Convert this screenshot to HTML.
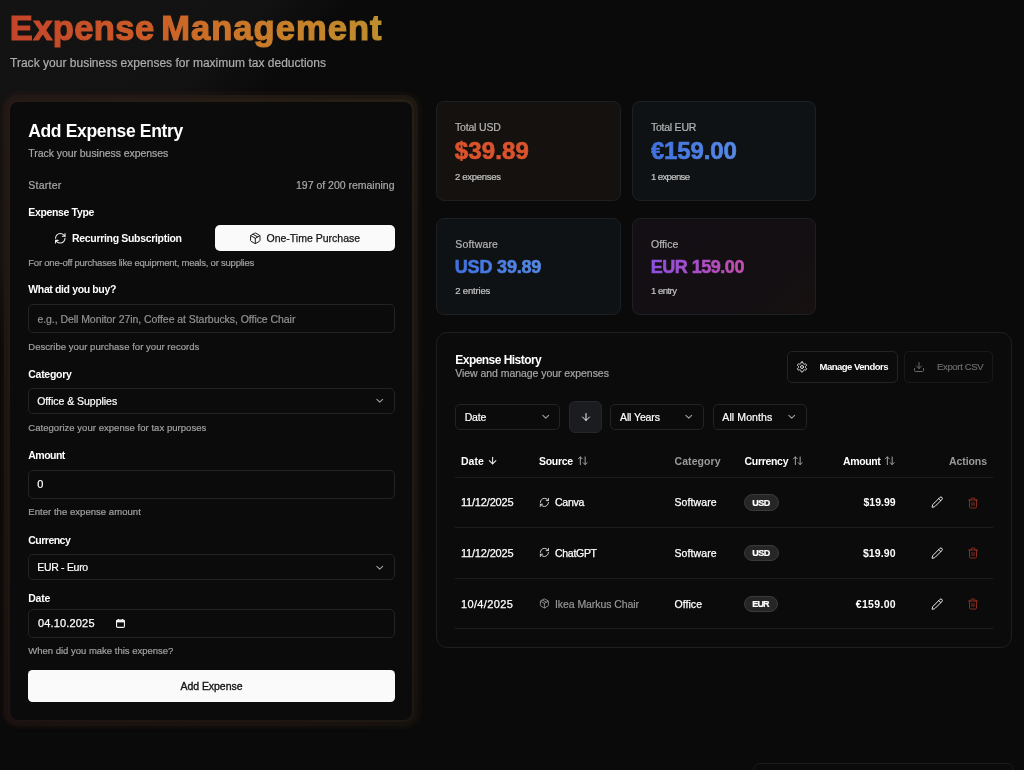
<!DOCTYPE html>
<html lang="en">
<head>
<meta charset="utf-8">
<title>Expense Management</title>
<style>
*{box-sizing:border-box;margin:0;padding:0}
html,body{width:1024px;height:770px;overflow:hidden;background:#0a0a0a}
body{position:relative;font-family:"Liberation Sans",sans-serif;color:#fff;
 background:linear-gradient(135deg,#131313 0%,#121212 14.8%,#0a0a0a 19.6%) #0a0a0a;}
.t{position:absolute;white-space:pre;font-weight:400}
.bx{position:absolute}
svg{position:absolute;overflow:visible}
.ic{fill:none;stroke:currentColor;stroke-width:2;stroke-linecap:round;stroke-linejoin:round}
.glow{left:0.5px;top:91px;width:421px;height:638px;border-radius:18px;
 background:linear-gradient(90deg,rgba(210,80,40,.04),rgba(200,100,40,.04) 50%,rgba(190,130,40,.04));filter:blur(1px)}
.glow2{left:4px;top:94.5px;width:413.5px;height:631px;border-radius:14px;
 background:linear-gradient(180deg,rgba(255,220,180,.02),rgba(0,0,0,.12)),linear-gradient(90deg,#1e1412,#1e1511 50%,#1a130f);filter:blur(.7px)}
.glow3{left:8px;top:98.5px;width:405.5px;height:623px;border-radius:10px;
 background:linear-gradient(180deg,rgba(255,220,180,.02),rgba(0,0,0,.12)),linear-gradient(90deg,#221614,#231912 50%,#201c12);filter:blur(.5px)}
.card{left:10px;top:102px;width:402px;height:617.5px;border-radius:8px;background:#0b0b0b}
.inp{left:28px;width:367px;border:1px solid #232323;border-radius:5px;background:#0b0b0b}
.stat{border:1px solid #1d2023;border-radius:8px}
.hist{left:436px;top:332px;width:576px;height:315.5px;border:1px solid #1f1f1f;border-radius:11px;background:#0b0b0b}
.btn{border:1px solid #222324;border-radius:5px}
.hr{left:455px;width:538px;height:1px;background:#1d1d1d}
.badge{height:16.5px;border-radius:9px;background:#262626;border:1px solid #3b3b3b}
</style>
</head>
<body>
<!-- left form card -->
<div class="bx glow"></div>
<div class="bx glow2"></div>
<div class="bx glow3"></div>
<div class="bx card"></div>
<div class="bx" style="left:215px;top:225px;width:180px;height:26px;border-radius:5px;background:#fafafa"></div>
<div class="bx inp" style="top:304px;height:29px"></div>
<div class="bx inp" style="top:388px;height:26px"></div>
<div class="bx inp" style="top:470px;height:29px"></div>
<div class="bx inp" style="top:554px;height:26px"></div>
<div class="bx inp" style="top:609px;height:29px"></div>
<div class="bx" style="left:28px;top:670px;width:367px;height:32px;border-radius:4.5px;background:#fafafa"></div>

<!-- stat cards -->
<div class="bx stat" style="left:436px;top:101px;width:185px;height:100px;background:#14110e"></div>
<div class="bx stat" style="left:632px;top:101px;width:184px;height:100px;background:#0f1215"></div>
<div class="bx stat" style="left:436px;top:218px;width:185px;height:97px;background:#0f1215"></div>
<div class="bx stat" style="left:632px;top:218px;width:184px;height:97px;background:linear-gradient(135deg,#130f14 0%,#130f13 70%,#17110f 100%)"></div>

<!-- history panel -->
<div class="bx hist"></div>
<div class="bx btn" style="left:787px;top:351px;width:110.5px;height:32px"></div>
<div class="bx btn" style="left:904px;top:351px;width:89px;height:32px;border-color:#191919"></div>
<div class="bx btn" style="left:455px;top:404px;width:105px;height:26px"></div>
<div class="bx btn" style="left:569px;top:401px;width:32.5px;height:32px;background:#1a1c1f;border-color:#25272a;border-radius:6px"></div>
<div class="bx btn" style="left:610px;top:404px;width:94px;height:26px"></div>
<div class="bx btn" style="left:712.5px;top:404px;width:94px;height:26px"></div>
<div class="bx hr" style="top:477px"></div>
<div class="bx hr" style="top:527px"></div>
<div class="bx hr" style="top:578px"></div>
<div class="bx hr" style="top:628px"></div>
<div class="bx badge" style="left:744px;top:494.3px;width:35px"></div>
<div class="bx badge" style="left:744px;top:544.7px;width:35px"></div>
<div class="bx badge" style="left:744px;top:595.5px;width:34px"></div>

<!-- bottom-right peeking card -->
<div class="bx" style="left:753px;top:762.5px;width:261px;height:30px;border:1px solid #181c20;border-radius:7px;background:#0b0b0c"></div>

<svg class="ic" viewBox="0 0 24 24" style="left:53.7px;top:232.1px;width:12.6px;height:12.6px;color:#f2f2f2;stroke-width:2"><path d="M3 12a9 9 0 0 1 9-9 9.75 9.75 0 0 1 6.74 2.74L21 8"/><path d="M21 3v5h-5"/><path d="M21 12a9 9 0 0 1-9 9 9.75 9.75 0 0 1-6.74-2.74L3 16"/><path d="M8 16H3v5"/></svg>
<svg class="ic" viewBox="0 0 24 24" style="left:248.5px;top:232.0px;width:12.6px;height:12.6px;color:#1a1a1a;stroke-width:1.9"><path d="m7.5 4.27 9 5.15"/><path d="M21 8a2 2 0 0 0-1-1.73l-7-4a2 2 0 0 0-2 0l-7 4A2 2 0 0 0 3 8v8a2 2 0 0 0 1 1.73l7 4a2 2 0 0 0 2 0l7-4A2 2 0 0 0 21 16Z"/><path d="m3.3 7 8.7 5 8.7-5"/><path d="M12 22V12"/></svg>
<svg class="ic" viewBox="0 0 24 24" style="left:373.9px;top:395.4px;width:11.5px;height:11.5px;color:#a0a0a0;stroke-width:2.3"><path d="m6 9 6 6 6-6"/></svg>
<svg class="ic" viewBox="0 0 24 24" style="left:373.9px;top:561.5px;width:11.5px;height:11.5px;color:#a0a0a0;stroke-width:2.3"><path d="m6 9 6 6 6-6"/></svg>
<svg class="ic" viewBox="0 0 24 24" style="left:796.1px;top:361.2px;width:12px;height:12px;color:#e8e8e8;stroke-width:1.9"><path d="M12.22 2h-.44a2 2 0 0 0-2 2v.18a2 2 0 0 1-1 1.73l-.43.25a2 2 0 0 1-2 0l-.15-.08a2 2 0 0 0-2.73.73l-.22.38a2 2 0 0 0 .73 2.73l.15.1a2 2 0 0 1 1 1.72v.51a2 2 0 0 1-1 1.74l-.15.09a2 2 0 0 0-.73 2.73l.22.38a2 2 0 0 0 2.73.73l.15-.08a2 2 0 0 1 2 0l.43.25a2 2 0 0 1 1 1.73V20a2 2 0 0 0 2 2h.44a2 2 0 0 0 2-2v-.18a2 2 0 0 1 1-1.73l.43-.25a2 2 0 0 1 2 0l.15.08a2 2 0 0 0 2.73-.73l.22-.39a2 2 0 0 0-.73-2.73l-.15-.08a2 2 0 0 1-1-1.74v-.5a2 2 0 0 1 1-1.74l.15-.09a2 2 0 0 0 .73-2.73l-.22-.38a2 2 0 0 0-2.73-.73l-.15.08a2 2 0 0 1-2 0l-.43-.25a2 2 0 0 1-1-1.73V4a2 2 0 0 0-2-2z"/><circle cx="12" cy="12" r="3"/></svg>
<svg class="ic" viewBox="0 0 24 24" style="left:913.2px;top:361.0px;width:12px;height:12px;color:#6a6a6a;stroke-width:2"><path d="M21 15v4a2 2 0 0 1-2 2H5a2 2 0 0 1-2-2v-4"/><path d="m7 10 5 5 5-5"/><path d="M12 15V3"/></svg>
<svg class="ic" viewBox="0 0 24 24" style="left:539.6px;top:411.1px;width:11.5px;height:11.5px;color:#a0a0a0;stroke-width:2.3"><path d="m6 9 6 6 6-6"/></svg>
<svg class="ic" viewBox="0 0 24 24" style="left:579.5px;top:411.0px;width:12px;height:12px;color:#f0f0f0;stroke-width:2"><path d="M12 5v14"/><path d="m19 12-7 7-7-7"/></svg>
<svg class="ic" viewBox="0 0 24 24" style="left:683.1px;top:411.1px;width:11.5px;height:11.5px;color:#a0a0a0;stroke-width:2.3"><path d="m6 9 6 6 6-6"/></svg>
<svg class="ic" viewBox="0 0 24 24" style="left:785.5px;top:411.1px;width:11.5px;height:11.5px;color:#a0a0a0;stroke-width:2.3"><path d="m6 9 6 6 6-6"/></svg>
<svg class="ic" viewBox="0 0 24 24" style="left:487.0px;top:455.4px;width:11.2px;height:11.2px;color:#f0f0f0;stroke-width:2.2"><path d="M12 5v14"/><path d="m19 12-7 7-7-7"/></svg>
<svg class="ic" viewBox="0 0 24 24" style="left:576.8px;top:455.4px;width:11.5px;height:11.5px;color:#a8a8a8;stroke-width:2"><path d="m21 16-4 4-4-4"/><path d="M17 20V4"/><path d="m3 8 4-4 4 4"/><path d="M7 4v16"/></svg>
<svg class="ic" viewBox="0 0 24 24" style="left:792.2px;top:455.4px;width:11.5px;height:11.5px;color:#a8a8a8;stroke-width:2"><path d="m21 16-4 4-4-4"/><path d="M17 20V4"/><path d="m3 8 4-4 4 4"/><path d="M7 4v16"/></svg>
<svg class="ic" viewBox="0 0 24 24" style="left:884.2px;top:455.4px;width:11.5px;height:11.5px;color:#a8a8a8;stroke-width:2"><path d="m21 16-4 4-4-4"/><path d="M17 20V4"/><path d="m3 8 4-4 4 4"/><path d="M7 4v16"/></svg>
<svg class="ic" viewBox="0 0 24 24" style="left:538.8px;top:497.0px;width:10.8px;height:10.8px;color:#d8d8d8;stroke-width:2.1"><path d="M3 12a9 9 0 0 1 9-9 9.75 9.75 0 0 1 6.74 2.74L21 8"/><path d="M21 3v5h-5"/><path d="M21 12a9 9 0 0 1-9 9 9.75 9.75 0 0 1-6.74-2.74L3 16"/><path d="M8 16H3v5"/></svg>
<svg class="ic" viewBox="0 0 24 24" style="left:931.4px;top:496.3px;width:12.4px;height:12.4px;color:#f0f0f0;stroke-width:1.9"><path d="M21.174 6.812a1 1 0 0 0-3.986-3.987L3.842 16.174a2 2 0 0 0-.5.83l-1.321 4.352a.5.5 0 0 0 .623.622l4.353-1.32a2 2 0 0 0 .83-.497z"/><path d="m15 5 4 4"/></svg>
<svg class="ic" viewBox="0 0 24 24" style="left:966.7px;top:496.5px;width:12px;height:12px;color:#8c2f20;stroke-width:1.9"><path d="M3 6h18"/><path d="M19 6v14c0 1-1 2-2 2H7c-1 0-2-1-2-2V6"/><path d="M8 6V4c0-1 1-2 2-2h4c1 0 2 1 2 2v2"/><path d="M10 11v6"/><path d="M14 11v6"/></svg>
<svg class="ic" viewBox="0 0 24 24" style="left:538.8px;top:547.4px;width:10.8px;height:10.8px;color:#d8d8d8;stroke-width:2.1"><path d="M3 12a9 9 0 0 1 9-9 9.75 9.75 0 0 1 6.74 2.74L21 8"/><path d="M21 3v5h-5"/><path d="M21 12a9 9 0 0 1-9 9 9.75 9.75 0 0 1-6.74-2.74L3 16"/><path d="M8 16H3v5"/></svg>
<svg class="ic" viewBox="0 0 24 24" style="left:931.4px;top:546.7px;width:12.4px;height:12.4px;color:#f0f0f0;stroke-width:1.9"><path d="M21.174 6.812a1 1 0 0 0-3.986-3.987L3.842 16.174a2 2 0 0 0-.5.83l-1.321 4.352a.5.5 0 0 0 .623.622l4.353-1.32a2 2 0 0 0 .83-.497z"/><path d="m15 5 4 4"/></svg>
<svg class="ic" viewBox="0 0 24 24" style="left:966.7px;top:546.9px;width:12px;height:12px;color:#8c2f20;stroke-width:1.9"><path d="M3 6h18"/><path d="M19 6v14c0 1-1 2-2 2H7c-1 0-2-1-2-2V6"/><path d="M8 6V4c0-1 1-2 2-2h4c1 0 2 1 2 2v2"/><path d="M10 11v6"/><path d="M14 11v6"/></svg>
<svg class="ic" viewBox="0 0 24 24" style="left:538.8px;top:598.2px;width:10.8px;height:10.8px;color:#929292;stroke-width:2"><path d="m7.5 4.27 9 5.15"/><path d="M21 8a2 2 0 0 0-1-1.73l-7-4a2 2 0 0 0-2 0l-7 4A2 2 0 0 0 3 8v8a2 2 0 0 0 1 1.73l7 4a2 2 0 0 0 2 0l7-4A2 2 0 0 0 21 16Z"/><path d="m3.3 7 8.7 5 8.7-5"/><path d="M12 22V12"/></svg>
<svg class="ic" viewBox="0 0 24 24" style="left:931.4px;top:597.5px;width:12.4px;height:12.4px;color:#f0f0f0;stroke-width:1.9"><path d="M21.174 6.812a1 1 0 0 0-3.986-3.987L3.842 16.174a2 2 0 0 0-.5.83l-1.321 4.352a.5.5 0 0 0 .623.622l4.353-1.32a2 2 0 0 0 .83-.497z"/><path d="m15 5 4 4"/></svg>
<svg class="ic" viewBox="0 0 24 24" style="left:966.7px;top:597.7px;width:12px;height:12px;color:#8c2f20;stroke-width:1.9"><path d="M3 6h18"/><path d="M19 6v14c0 1-1 2-2 2H7c-1 0-2-1-2-2V6"/><path d="M8 6V4c0-1 1-2 2-2h4c1 0 2 1 2 2v2"/><path d="M10 11v6"/><path d="M14 11v6"/></svg>
<svg viewBox="0 0 9 9" style="left:115.7px;top:618.8px;width:9px;height:9px"><rect x="0.55" y="1.1" width="7.9" height="7.3" rx="1.1" fill="none" stroke="#f2f2f2" stroke-width="1.1"/><rect x="0.55" y="1.1" width="7.9" height="2.3" fill="#f2f2f2"/><rect x="1.9" y="0" width="1.1" height="1.6" fill="#f2f2f2"/><rect x="6" y="0" width="1.1" height="1.6" fill="#f2f2f2"/></svg>
<div style="position:absolute;left:0;top:0;width:1024px;height:770px;will-change:transform">
<div class="t" style="left:9.7px;top:4.6px;font-size:34.5px;line-height:46px;height:46px;font-weight:700;color:transparent;letter-spacing:0.430px;background:linear-gradient(90deg,#c4442a 0%,#cb5d27 100%);-webkit-text-stroke:1.2px transparent;-webkit-background-clip:text;background-clip:text;">Expense</div>
<div class="t" style="left:161.2px;top:4.6px;font-size:34.5px;line-height:46px;height:46px;font-weight:700;color:transparent;letter-spacing:1.047px;background:linear-gradient(90deg,#cc6026 0%,#cd6a27 12%,#c87e2a 52%,#be8e2d 100%);-webkit-text-stroke:1.2px transparent;-webkit-background-clip:text;background-clip:text;">Management</div>
<div class="t" style="left:10.0px;top:55.0px;font-size:12px;line-height:16px;height:16px;color:#adadad;letter-spacing:0.018px;-webkit-text-stroke:.2px;">Track your business expenses for maximum tax deductions</div>
<div class="t" style="left:28.2px;top:119.0px;font-size:17.5px;line-height:24px;height:24px;font-weight:700;letter-spacing:-0.342px;">Add Expense Entry</div>
<div class="t" style="left:28.3px;top:145.7px;font-size:10.5px;line-height:14px;height:14px;color:#a8a8a8;letter-spacing:-0.053px;-webkit-text-stroke:.2px;">Track your business expenses</div>
<div class="t" style="left:28.3px;top:178.0px;font-size:10.5px;line-height:14px;height:14px;color:#a8a8a8;letter-spacing:0.247px;-webkit-text-stroke:.2px;">Starter</div>
<div class="t" style="left:296.0px;top:178.0px;font-size:10.5px;line-height:14px;height:14px;color:#a8a8a8;letter-spacing:-0.008px;-webkit-text-stroke:.2px;">197 of 200 remaining</div>
<div class="t" style="left:28.3px;top:204.5px;font-size:10.5px;line-height:14px;height:14px;font-weight:700;letter-spacing:-0.349px;">Expense Type</div>
<div class="t" style="left:72.0px;top:230.6px;font-size:10.5px;line-height:14px;height:14px;font-weight:700;letter-spacing:-0.318px;">Recurring Subscription</div>
<div class="t" style="left:266.5px;top:230.6px;font-size:10.5px;line-height:14px;height:14px;color:#141414;-webkit-text-stroke:0.25px #141414;">One-Time Purchase</div>
<div class="t" style="left:28.3px;top:257.0px;font-size:9.5px;line-height:12px;height:12px;color:#a0a0a0;letter-spacing:-0.228px;-webkit-text-stroke:.2px;">For one-off purchases like equipment, meals, or supplies</div>
<div class="t" style="left:28.3px;top:282.0px;font-size:10.5px;line-height:14px;height:14px;font-weight:700;letter-spacing:-0.369px;">What did you buy?</div>
<div class="t" style="left:37.4px;top:312.0px;font-size:10.5px;line-height:14px;height:14px;color:#929292;letter-spacing:-0.054px;-webkit-text-stroke:.2px;">e.g., Dell Monitor 27in, Coffee at Starbucks, Office Chair</div>
<div class="t" style="left:28.3px;top:340.6px;font-size:9.5px;line-height:12px;height:12px;color:#a0a0a0;letter-spacing:0.039px;-webkit-text-stroke:.2px;">Describe your purchase for your records</div>
<div class="t" style="left:28.3px;top:366.5px;font-size:10.5px;line-height:14px;height:14px;font-weight:700;letter-spacing:-0.288px;">Category</div>
<div class="t" style="left:37.2px;top:394.0px;font-size:10.5px;line-height:14px;height:14px;letter-spacing:-0.022px;-webkit-text-stroke:0.2px #fff;">Office &amp; Supplies</div>
<div class="t" style="left:28.3px;top:422.0px;font-size:9.5px;line-height:12px;height:12px;color:#a0a0a0;letter-spacing:0.041px;-webkit-text-stroke:.2px;">Categorize your expense for tax purposes</div>
<div class="t" style="left:28.3px;top:448.0px;font-size:10.5px;line-height:14px;height:14px;font-weight:700;letter-spacing:-0.534px;">Amount</div>
<div class="t" style="left:37.3px;top:477.0px;font-size:11px;line-height:14px;height:14px;-webkit-text-stroke:.2px;">0</div>
<div class="t" style="left:28.3px;top:506.0px;font-size:9.5px;line-height:12px;height:12px;color:#a0a0a0;letter-spacing:0.046px;-webkit-text-stroke:.2px;">Enter the expense amount</div>
<div class="t" style="left:28.3px;top:533.0px;font-size:10.5px;line-height:14px;height:14px;font-weight:700;letter-spacing:-0.516px;">Currency</div>
<div class="t" style="left:37.2px;top:560.0px;font-size:10.5px;line-height:14px;height:14px;letter-spacing:-0.299px;-webkit-text-stroke:0.2px #fff;">EUR - Euro</div>
<div class="t" style="left:28.3px;top:591.0px;font-size:10.5px;line-height:14px;height:14px;font-weight:700;letter-spacing:-0.255px;">Date</div>
<div class="t" style="left:38.0px;top:616.3px;font-size:11px;line-height:14px;height:14px;letter-spacing:0.160px;-webkit-text-stroke:0.25px #fff;">04.10.2025</div>
<div class="t" style="left:28.3px;top:645.1px;font-size:9.5px;line-height:12px;height:12px;color:#a0a0a0;letter-spacing:-0.008px;-webkit-text-stroke:.2px;">When did you make this expense?</div>
<div class="t" style="left:180.5px;top:679.0px;font-size:10.5px;line-height:14px;height:14px;color:#141414;letter-spacing:-0.047px;-webkit-text-stroke:0.35px #141414;">Add Expense</div>
<div class="t" style="left:455.0px;top:119.6px;font-size:10.5px;line-height:14px;height:14px;color:#b5b5b5;letter-spacing:-0.183px;-webkit-text-stroke:.2px;">Total USD</div>
<div class="t" style="left:454.8px;top:135.3px;font-size:24px;line-height:32px;height:32px;font-weight:700;color:#d9532c;letter-spacing:0.119px;-webkit-text-stroke:0.7px #d9532c;">$39.89</div>
<div class="t" style="left:455.0px;top:170.6px;font-size:9.5px;line-height:12px;height:12px;color:#c4c4c4;letter-spacing:-0.288px;-webkit-text-stroke:.2px;">2 expenses</div>
<div class="t" style="left:651.0px;top:119.6px;font-size:10.5px;line-height:14px;height:14px;color:#b5b5b5;letter-spacing:-0.246px;-webkit-text-stroke:.2px;">Total EUR</div>
<div class="t" style="left:650.8px;top:135.3px;font-size:24px;line-height:32px;height:32px;font-weight:700;color:transparent;letter-spacing:-0.128px;-webkit-text-stroke:0.7px transparent;background:linear-gradient(90deg,#4071e0,#568ae6);-webkit-background-clip:text;background-clip:text;">€159.00</div>
<div class="t" style="left:651.0px;top:170.6px;font-size:9.5px;line-height:12px;height:12px;color:#c4c4c4;letter-spacing:-0.605px;-webkit-text-stroke:.2px;">1 expense</div>
<div class="t" style="left:455.3px;top:237.0px;font-size:10.5px;line-height:14px;height:14px;color:#b5b5b5;letter-spacing:0.166px;-webkit-text-stroke:.2px;">Software</div>
<div class="t" style="left:454.8px;top:255.4px;font-size:18px;line-height:24px;height:24px;font-weight:700;color:transparent;letter-spacing:-0.183px;-webkit-text-stroke:0.6px transparent;background:linear-gradient(90deg,#4071e0,#568ae6);-webkit-background-clip:text;background-clip:text;">USD 39.89</div>
<div class="t" style="left:455.3px;top:285.0px;font-size:9.5px;line-height:12px;height:12px;color:#c4c4c4;letter-spacing:-0.180px;-webkit-text-stroke:.2px;">2 entries</div>
<div class="t" style="left:651.0px;top:237.0px;font-size:10.5px;line-height:14px;height:14px;color:#b5b5b5;letter-spacing:0.013px;-webkit-text-stroke:.2px;">Office</div>
<div class="t" style="left:650.8px;top:255.4px;font-size:18px;line-height:24px;height:24px;font-weight:700;color:transparent;letter-spacing:-0.496px;-webkit-text-stroke:0.6px transparent;background:linear-gradient(90deg,#8c50e0,#c44eac);-webkit-background-clip:text;background-clip:text;">EUR 159.00</div>
<div class="t" style="left:651.0px;top:285.0px;font-size:9.5px;line-height:12px;height:12px;color:#c4c4c4;letter-spacing:-0.508px;-webkit-text-stroke:.2px;">1 entry</div>
<div class="t" style="left:455.3px;top:351.7px;font-size:12px;line-height:16px;height:16px;font-weight:700;letter-spacing:-0.539px;">Expense History</div>
<div class="t" style="left:455.3px;top:365.9px;font-size:10.5px;line-height:14px;height:14px;color:#a6a6a6;letter-spacing:-0.053px;-webkit-text-stroke:.2px;">View and manage your expenses</div>
<div class="t" style="left:819.5px;top:361.1px;font-size:9.5px;line-height:12px;height:12px;font-weight:700;letter-spacing:-0.500px;">Manage Vendors</div>
<div class="t" style="left:937.0px;top:361.1px;font-size:9.5px;line-height:12px;height:12px;color:#6a6a6a;letter-spacing:-0.338px;-webkit-text-stroke:0.2px #6a6a6a;">Export CSV</div>
<div class="t" style="left:464.7px;top:409.8px;font-size:10.5px;line-height:14px;height:14px;letter-spacing:-0.163px;-webkit-text-stroke:0.2px #fff;">Date</div>
<div class="t" style="left:620.0px;top:409.8px;font-size:10.5px;line-height:14px;height:14px;letter-spacing:-0.109px;-webkit-text-stroke:0.2px #fff;">All Years</div>
<div class="t" style="left:722.3px;top:409.8px;font-size:10.5px;line-height:14px;height:14px;letter-spacing:0.108px;-webkit-text-stroke:0.2px #fff;">All Months</div>
<div class="t" style="left:460.9px;top:453.8px;font-size:10.5px;line-height:14px;height:14px;font-weight:700;letter-spacing:0.078px;">Date</div>
<div class="t" style="left:539.1px;top:453.8px;font-size:10.5px;line-height:14px;height:14px;font-weight:700;letter-spacing:-0.322px;">Source</div>
<div class="t" style="left:674.5px;top:453.8px;font-size:10.5px;line-height:14px;height:14px;font-weight:700;color:#9a9a9a;letter-spacing:0.069px;">Category</div>
<div class="t" style="left:744.5px;top:453.8px;font-size:10.5px;line-height:14px;height:14px;font-weight:700;letter-spacing:-0.301px;">Currency</div>
<div class="t" style="left:843.0px;top:453.8px;font-size:10.5px;line-height:14px;height:14px;font-weight:700;letter-spacing:-0.374px;">Amount</div>
<div class="t" style="left:949.0px;top:453.8px;font-size:10.5px;line-height:14px;height:14px;font-weight:700;color:#9a9a9a;letter-spacing:-0.086px;">Actions</div>
<div class="t" style="left:460.9px;top:495.4px;font-size:11px;line-height:14px;height:14px;letter-spacing:-0.172px;-webkit-text-stroke:0.25px #fff;">11/12/2025</div>
<div class="t" style="left:460.9px;top:545.8px;font-size:11px;line-height:14px;height:14px;letter-spacing:-0.172px;-webkit-text-stroke:0.25px #fff;">11/12/2025</div>
<div class="t" style="left:460.9px;top:596.6px;font-size:11px;line-height:14px;height:14px;letter-spacing:0.383px;-webkit-text-stroke:0.25px #fff;">10/4/2025</div>
<div class="t" style="left:555.0px;top:495.4px;font-size:10.5px;line-height:14px;height:14px;letter-spacing:-0.265px;-webkit-text-stroke:0.25px #fff;">Canva</div>
<div class="t" style="left:555.0px;top:545.8px;font-size:10.5px;line-height:14px;height:14px;letter-spacing:-0.294px;-webkit-text-stroke:0.25px #fff;">ChatGPT</div>
<div class="t" style="left:555.0px;top:596.6px;font-size:10.5px;line-height:14px;height:14px;color:#969696;letter-spacing:-0.075px;-webkit-text-stroke:.2px;">Ikea Markus Chair</div>
<div class="t" style="left:674.5px;top:495.4px;font-size:10.5px;line-height:14px;height:14px;letter-spacing:0.109px;-webkit-text-stroke:0.25px #fff;">Software</div>
<div class="t" style="left:674.5px;top:545.8px;font-size:10.5px;line-height:14px;height:14px;letter-spacing:0.109px;-webkit-text-stroke:0.25px #fff;">Software</div>
<div class="t" style="left:674.5px;top:596.6px;font-size:10.5px;line-height:14px;height:14px;letter-spacing:0.053px;-webkit-text-stroke:0.25px #fff;">Office</div>
<div class="t" style="left:752.3px;top:497.0px;font-size:9px;line-height:12px;height:12px;font-weight:700;letter-spacing:-0.508px;-webkit-text-stroke:.2px #fff;">USD</div>
<div class="t" style="left:752.3px;top:547.4px;font-size:9px;line-height:12px;height:12px;font-weight:700;letter-spacing:-0.508px;-webkit-text-stroke:.2px #fff;">USD</div>
<div class="t" style="left:752.3px;top:598.0px;font-size:9px;line-height:12px;height:12px;font-weight:700;letter-spacing:-0.908px;-webkit-text-stroke:.2px #fff;">EUR</div>
<div class="t" style="left:863.5px;top:495.4px;font-size:10.5px;line-height:14px;height:14px;font-weight:700;letter-spacing:0.015px;">$19.99</div>
<div class="t" style="left:862.9px;top:545.8px;font-size:10.5px;line-height:14px;height:14px;font-weight:700;letter-spacing:0.135px;">$19.90</div>
<div class="t" style="left:855.8px;top:596.6px;font-size:10.5px;line-height:14px;height:14px;font-weight:700;letter-spacing:0.322px;">€159.00</div>
</div>
</body>
</html>
